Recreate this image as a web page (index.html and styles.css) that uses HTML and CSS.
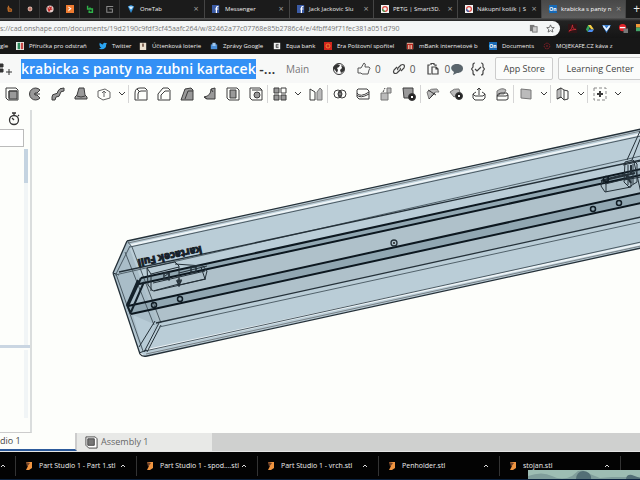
FILE: index.html
```html
<!DOCTYPE html>
<html lang="en">
<head>
  <meta charset="UTF-8">
  <title>krabicka s panty na zubni kartacek</title>
  <link rel="stylesheet" href="styles.css">
</head>
<body>

  <!-- browser tabs -->
  <nav class="tabs">
    <a href="#" class="pinned" aria-label="Pinned 1"><svg viewBox="0 0 10 10"><path d="M3 1l1 3 3 1v3H3zM2 3l1 5" fill="#8a4a1c" stroke="#c8742c"/></svg></a>
    <a href="#" class="pinned" aria-label="Pinned 2"><svg viewBox="0 0 10 10"><circle cx="5" cy="5" r="3" fill="#d9b8ac"/><path d="M3 5h4M5 3v4" stroke="#b05040"/></svg></a>
    <a href="#" class="pinned" aria-label="Pinned 3"><svg viewBox="0 0 10 10"><circle cx="5" cy="5" r="4.5" fill="#e5d0cd"/><path d="M2 3l3 5M4 2l3 4M7 2L3 8M2 6l6-1" stroke="#c32b28" stroke-width="1.4"/></svg></a>
    <a href="#" class="pinned" aria-label="Pinned 4"><svg viewBox="0 0 10 10"><rect width="10" height="10" fill="#ee7b30"/><path d="M3 2l4 2.5L3 8V6l2-1.500-2-1z" fill="#fff"/></svg></a>
    <a href="#" class="pinned" aria-label="Pinned 5"><svg viewBox="0 0 10 10"><path d="M2 1v4h3V3M5 5h3v4H4V7" fill="none" stroke="#2fb34a" stroke-width="1.8"/></svg></a>
    <a href="#" class="pinned" aria-label="Pinned 6"><svg viewBox="0 0 10 10"><path d="M9 2H1v7h7V5H4" fill="none" stroke="#8b8b8b" stroke-width="1.3"/></svg></a>
    <div class="tab"><svg viewBox="0 0 10 10"><path d="M1 2l4-2 4 2-4 8z" fill="#2f8fd6"/><path d="M2 2h6L5 6z" fill="#dff1ff"/></svg><a href="#">OneTab</a><button aria-label="Close OneTab">×</button></div>
    <div class="tab"><svg viewBox="0 0 10 10"><rect width="9" height="10" fill="#3b5ba5"/><path d="M8 2H7Q5.500 2 5.500 4v6M4 5h4" fill="none" stroke="#fff" stroke-width="1.500"/></svg><a href="#">Messenger</a><button aria-label="Close Messenger">×</button></div>
    <div class="tab"><svg viewBox="0 0 10 10"><rect width="9" height="10" fill="#3b5ba5"/><path d="M8 2H7Q5.500 2 5.500 4v6M4 5h4" fill="none" stroke="#fff" stroke-width="1.500"/></svg><a href="#">Jack Jackovic Slu</a><button aria-label="Close Jack Jackovic">×</button></div>
    <div class="tab"><svg viewBox="0 0 10 10"><rect width="10" height="10" fill="#f4f4f4"/><circle cx="5" cy="5" r="3" fill="none" stroke="#d8433c" stroke-width="1.500"/><path d="M2 5a3 3 0 0 0 3 3" fill="none" stroke="#3a9d50" stroke-width="1.500"/></svg><a href="#">PETG | Smart3D.</a><button aria-label="Close PETG">×</button></div>
    <div class="tab"><svg viewBox="0 0 10 10"><rect width="10" height="10" fill="#f4f4f4"/><circle cx="5" cy="5" r="3" fill="none" stroke="#d8433c" stroke-width="1.500"/><path d="M2 5a3 3 0 0 0 3 3" fill="none" stroke="#3767b5" stroke-width="1.500"/></svg><a href="#">Nákupní košík | S</a><button aria-label="Close Nákupní košík">×</button></div>
    <div class="tab active"><span class="on">On</span><a href="#">krabicka s panty n</a><button aria-label="Close krabicka">×</button></div>
    <button class="new-tab" aria-label="New tab">+</button>
  </nav>

  <div class="address">
    <label class="url-box" for="url"><input id="url" type="text" aria-label="Address" value="s://cad.onshape.com/documents/19d2190c9fdf3cf45aafc264/w/82462a77c07768e85b2786c4/e/4fbff49f71fec381a051d790">
      <svg viewBox="0 0 10 10"><rect x="1" y="1" width="5" height="7" fill="#777"/><rect x="4" y="3" width="5" height="6" fill="#ccc" stroke="#777"/></svg>
      <svg viewBox="0 0 10 10"><path d="M5 1l1.200 2.800 3 .2-2.300 2 .8 3L5 7.400 2.300 9l.8-3L.8 4l3-.2z" fill="none" stroke="#555" stroke-width=".9"/></svg>
    </label>
    <div class="extensions">
      <svg viewBox="0 0 10 10"><rect width="10" height="10" fill="#301416"/><path d="M1 8q4-2 4-7 0 5 4 5-5 0-8 2" fill="none" stroke="#c92d35"/></svg>
      <svg viewBox="0 0 10 10"><path d="M3.500 1h3L3 9 1 6z" fill="#36a35c"/><path d="M3.500 1h3L10 6H7z" fill="#f6cf45"/><path d="M3 9l1.500-3H10L8 9z" fill="#4c8df2"/></svg>
      <svg viewBox="0 0 10 10"><path d="M0 1h10L5 10z" fill="#3b7fd0"/><path d="M2 1l3 4 3-4 1 2-4 5-4-5z" fill="#eaf4ff"/></svg>
      <svg viewBox="0 0 10 10"><circle cx="4" cy="4" r="4" fill="#df2329"/><path d="M1 4h6" stroke="#fff" stroke-width="1.500"/><rect x="5" y="5" width="5" height="5" fill="#777"/></svg>
      <svg viewBox="0 0 10 10"><path d="M0 0h10v4H0z" fill="#f29a38"/><path d="M0 4h10v4H0z" fill="#43a66a"/></svg>
    </div>
  </div>

  <nav class="bookmarks">
    <a href="#">gle</a>
    <a href="#"><svg viewBox="0 0 10 10"><rect width="10" height="10" fill="#e9eee9"/><path d="M2 1h3v8H2z" fill="#2e8a5d"/><path d="M6 1h3v8H6z" fill="#c84848"/></svg><span>Příručka pro odstraň</span></a>
    <a href="#"><svg viewBox="0 0 10 10"><path d="M0 8q2 0 3-1-2-.5-2-2Q0 3 1 1q2 2 4 2 0-2 2-2l3 .5L9 3q0 6-6 6-2 0-3-1" fill="#2aa3ef"/></svg><span>Twitter</span></a>
    <a href="#"><svg viewBox="0 0 10 10"><path d="M1 1h8v9H1z" fill="#eadfce"/><path d="M4 2h2v4H4z" fill="#6b4b3b"/></svg><span>Účtenková loterie</span></a>
    <a href="#"><svg viewBox="0 0 10 10"><path d="M1 3h8v6H1z" fill="#4a8ed8"/><path d="M3 1h4v4H3z" fill="#9fc7ee"/></svg><span>Zprávy Google</span></a>
    <a href="#"><svg viewBox="0 0 10 10"><path d="M1 1h8v8H1z" fill="#f2f2f2"/><path d="M7 3H4v4h3M4 5h3" fill="none" stroke="#333"/></svg><span>Equa bank</span></a>
    <a href="#"><svg viewBox="0 0 10 10"><rect width="10" height="10" fill="#d3261d"/><circle cx="5" cy="5" r="2.500" fill="none" stroke="#f09b3b"/></svg><span>Era Poštovní spořitel</span></a>
    <a href="#"><svg viewBox="0 0 10 10"><path d="M1 1h8v8H1z" fill="#e9c9b2"/><path d="M2 9V3h3v6M5 3h3v6" fill="none" stroke="#b5271f" stroke-width="1.500"/></svg><span>mBank internetové b</span></a>
    <a href="#"><span class="on">On</span><span>Documents</span></a>
    <a href="#"><svg viewBox="0 0 10 10"><circle cx="5" cy="5" r="3.500" fill="none" stroke="#a31f2b" stroke-dasharray="2 1"/><circle cx="5" cy="5" r="1" fill="#a31f2b"/></svg><span>MOJEKAFE.CZ káva z</span></a>
  </nav>

  <!-- document header -->
  <header class="doc-header">
    <svg class="insert" viewBox="0 0 12 14"><path d="M0 2h3v3H0M0 7h3v3H0" fill="#333" stroke="#333"/><path d="M9 7v6M6 10h6" stroke="#333"/></svg>
    <h1><mark>krabicka s panty na zubni kartacek</mark> -...</h1>
    <span class="workspace">Main</span>
    <div class="stats">
      <svg viewBox="0 0 14 14"><circle cx="7" cy="7" r="5.500" fill="#fff" stroke="#333"/><path d="M2 4l3-2 3 1-1 2-2 1 1 2-1 3-2-3-2-2zM9 3l3 2v4l-3 2-1-3 2-2z" fill="#333"/></svg>
      <button aria-label="Likes"><svg viewBox="0 0 14 14"><path d="M1 6h3l3-5q2 0 1 4h4q2 1 0 3l-1 4H5L4 11H1z" fill="none" stroke="#555"/></svg>0</button>
      <button aria-label="Links"><svg viewBox="0 0 14 14"><path d="M6 8q-1-1 0-2l3-3q2-1 3 0t0 3L9 9M8 6q1 1 0 2l-3 3q-2 1-3 0t0-3l3-3" fill="none" stroke="#444" stroke-width="1.200"/></svg>0</button>
      <button aria-label="Copies"><svg viewBox="0 0 14 14"><path d="M5 3V1.500h3V3M4 3H2v9h3M8 3h2v1M6 5h4l2 2v5H6zM10 5v2h2" fill="none" stroke="#444" stroke-width="1.200"/></svg>0</button>
    </div>
    <button class="icon" aria-label="Comments"><svg viewBox="0 0 14 14"><path d="M7 2c8 0 8 9 0 9L3 13l1-3C-1 7 1 2 7 2" fill="#59646b"/></svg></button>
    <button class="icon" aria-label="FeatureScript"><svg viewBox="0 0 14 14"><path d="M4 1Q2 1 2 3v2L.500 7 2 9v2q0 2 2 2M10 1q2 0 2 2v2l1.500 2L12 9v2q0 2-2 2M4 7l2 2 4-4" fill="none" stroke="#444" stroke-width="1.200"/></svg></button>
    <button class="boxed">App Store</button>
    <button class="boxed last">Learning Center</button>
  </header>

  <!-- feature toolbar -->
  <div class="toolbar">
    <button aria-label="Extrude"><svg viewBox="0 0 14 14"><path class="f" d="M4 4h8v8H4z"/><path d="M1 1h10l2 2v10H3L1 11zM4 4v7M4 4h8"/></svg></button>
    <button aria-label="Revolve"><svg viewBox="0 0 14 14"><path class="f" d="M12 3A6 6 0 1 0 12 11L9 8H7V6h2z"/><path d="M6 7l6 0"/></svg></button>
    <button aria-label="Sweep"><svg viewBox="0 0 14 14"><path class="f" d="M1 10q0-3 3-3 3 0 3-3 1-3 6-3v3Q9 4 9 7q0 3-4 3l-1 3H1z"/></svg></button>
    <button aria-label="Loft"><svg viewBox="0 0 14 14"><path class="f" d="M5 1h5l1 7 2 2v2H1v-2l2-2z"/><path d="M3 9q4 2 8 0"/></svg></button>
    <button aria-label="Thicken"><svg viewBox="0 0 14 14"><path d="M1 4l7-2 5 3v6l-7 2-5-3zM7 5v5M5 6l2-2 2 2" stroke="#666"/></svg></button>
    <button class="more" aria-label="More solids"><svg viewBox="0 0 8 6"><path d="M1 1l3 3 3-3"/></svg></button>
    <i></i>
    <button aria-label="Fillet"><svg viewBox="0 0 14 14"><path d="M1 13V6q0-5 5-5h5l2 2v10zM4 12V7q0-3 3-3h5M3 2l2 2"/></svg></button>
    <button aria-label="Chamfer"><svg viewBox="0 0 14 14"><path d="M1 13V7l5-6h5l2 2v10zM4 12V8l4-4h4"/></svg></button>
    <button aria-label="Draft"><svg viewBox="0 0 14 14"><path class="f" d="M1 13L5 2l6-1 2 2v10z"/><path d="M5 12l3-8h5"/></svg></button>
    <button aria-label="Rib"><svg viewBox="0 0 14 14"><path class="f" d="M1 10q7-1 7-8l4-1v11H4z"/><path d="M1 10l3 2M8 2l2 3"/></svg></button>
    <button aria-label="Shell"><svg viewBox="0 0 14 14"><path d="M1 1h10l2 2v10H3L1 11z"/><path class="f" d="M4 3h6v8H4z"/></svg></button>
    <button aria-label="Hole"><svg viewBox="0 0 14 14"><path d="M1 1h10l2 2v10H3L1 11zM3 3h10"/><circle class="f" cx="8" cy="8" r="3"/></svg></button>
    <i></i>
    <button aria-label="Pattern"><svg viewBox="0 0 14 14"><path class="f" d="M1 1h5v5H1zM1 8h5v5H1zM8 8h5v5H8z"/><path d="M8 1h5v5H8z"/></svg></button>
    <button class="more" aria-label="More patterns"><svg viewBox="0 0 8 6"><path d="M1 1l3 3 3-3"/></svg></button>
    <button aria-label="Mirror"><svg viewBox="0 0 14 14"><path d="M1 2l5 3v8H1z"/><path class="l" d="M8 5l3-4 2 2v10H8z"/></svg></button>
    <i></i>
    <button aria-label="Boolean"><svg viewBox="0 0 14 14"><circle cx="5" cy="7" r="4"/><circle cx="9" cy="7" r="4"/><path class="f" d="M7 4q3 3 0 6-3-3 0-6"/></svg></button>
    <button aria-label="Split"><svg viewBox="0 0 14 14"><path d="M2 2h9l2 2v8H3L1 10V3zM1 6q3 5 12-1M1 8q3 4 12-1"/></svg></button>
    <button aria-label="Transform"><svg viewBox="0 0 14 14"><path class="l" d="M2 6h7v7H2z"/><path class="l" d="M8 1h4v5H8z"/><path d="M4 5l2-4" stroke-dasharray="2 1"/></svg></button>
    <button aria-label="Delete part"><svg viewBox="0 0 14 14"><path class="f" d="M1 1h10v10H2z"/><circle cx="10" cy="10" r="3.500" fill="#222"/><path d="M9 9l2 2M11 9l-2 2" stroke="#fff"/></svg></button>
    <i></i>
    <button aria-label="Modify fillet"><svg viewBox="0 0 14 14"><path class="l" d="M1 5q4-4 10-3l2 3q-6-1-8 5l-2 2z"/><path d="M3 12L9 6M2 3l8 5"/></svg></button>
    <button aria-label="Delete face"><svg viewBox="0 0 14 14"><path class="l" d="M1 5q4-4 9-3l1 4-6 4z"/><circle cx="10" cy="9" r="3.500" fill="#222"/><path d="M9 8l2 2M11 8l-2 2" stroke="#fff"/></svg></button>
    <button aria-label="Move face"><svg viewBox="0 0 14 14"><path d="M1 7l3-2M10 5l3 2v4l-2 2H3L1 11V7l2 2h8l2-2M7 8V1M5 3l2-2 2 2"/></svg></button>
    <button aria-label="Replace face"><svg viewBox="0 0 14 14"><path class="l" d="M2 4q5-4 9-1l-2 4q-4-1-7 2z"/><path d="M2 9q1-3 4-3h6l1 2v4l-2 1H2zM2 9h9l2-1"/></svg></button>
    <i></i>
    <button aria-label="Plane"><svg viewBox="0 0 14 14"><path class="l" d="M2 2l10 1v9L2 11z"/></svg></button>
    <button class="more" aria-label="More planes"><svg viewBox="0 0 8 6"><path d="M1 1l3 3 3-3"/></svg></button>
    <i></i>
    <button aria-label="Frame"><svg viewBox="0 0 14 14"><path class="l" d="M1 3l4-2v9l-4 2z"/><path d="M1 3l4-2 3 2v10L5 10M1 12l4-2M8 3l4 1v8l-4 1"/></svg></button>
    <button class="more" aria-label="More frames"><svg viewBox="0 0 8 6"><path d="M1 1l3 3 3-3"/></svg></button>
    <i></i>
    <button aria-label="Add custom features"><svg viewBox="0 0 14 14"><path d="M1 1h12v12H1z" stroke-dasharray="3 2" stroke="#888"/><path d="M7 4v6M4 7h6" stroke-width="2"/></svg></button>
    <button class="more" aria-label="More features"><svg viewBox="0 0 8 6"><path d="M1 1l3 3 3-3"/></svg></button>
  </div>

  <main>
    <aside>
      <button class="rollback" aria-label="Regeneration times"><svg viewBox="0 0 14 14"><circle cx="7" cy="8" r="4.500"/><path d="M5 1h4M7 1v3M7 8L5 6M11 3l1 1"/></svg></button>
      <input type="text" class="filter" aria-label="Filter features">
      <div class="features"><div class="thumb"></div></div>
      <div class="parts"></div>
    </aside>
    <svg class="model" viewBox="31 104 609 329" preserveAspectRatio="xMinYMin slice" fill="none" stroke="#243038">
      <path d="M126 241L640 129V248L144 356 138 352 112 273z" fill="#bacdd7" stroke="none"/>
      <path d="M140 278L640 170V217L156 323z" fill="#afc1ca" stroke="none"/>
      <path d="M126 241L112 273 140 350 157 324 140 280z" fill="#a9bdc8" stroke="none"/>
      <path d="M132 315L155 325 142 350z" fill="#b7cbd6" stroke="none"/>
      <path d="M140 278L640 169V175L138 285z" fill="#91a7b2" stroke="none"/>
      <path d="M127 306L640 193V203L130 314z" fill="#91a7b2" stroke="none"/>
      <!-- rounded outer edges -->
      <path d="M130 245L640 134M146 350L640 244" stroke="#eef4f7" stroke-width="2"/>
      <path d="M126 241L640 129M112 273L126 241M112 273L139 354Q141 357 146 356L640 248" stroke-width="1.300"/>
      <path d="M127 243L640 131M145 354L640 246" stroke="#777f84"/>
      <path d="M129 247L640 136M144 351L640 242M115 274L129 246M115 274L142 351M126 241L131 247 160 323M124 252L153 325" stroke="#4b5a63"/>
      <path d="M158 323L143 352M154 321L138 347M160 325L146 352M112 273L118 275M138 353L146 350"/>
      <!-- inner walls -->
      <path d="M114 275L640 156M158 327L640 222" stroke="#52626b"/>
      <path d="M118 272L640 160M155 323L640 217" stroke-width="1.300"/>
      <!-- hinge rails -->
      <path d="M140 278L640 169M138 284L640 175M127 306L640 193M130 314L640 203" stroke="#0c171f" stroke-width="2"/>
      <path d="M140 278L127 306M143 282L130 312M137 280L126 305L130 314" stroke="#14212a" stroke-width="2"/>
      <!-- left hinge -->
      <path d="M146 268L174 262 178 266V284L152 291 147 285zM146 268L150 274V291M150 274L178 267M152 283L204 271M153 291L205 279M174 264L202 266 206 271 204 279 178 285M178 273L206 266M164 276l4-3v8M200 267l4 12M178 278v9M176 280h5"/>
      <path d="M163 273h5v6h-5zM190 267h5v5h-5zM176 281l2 4 2-4z" stroke-width="1.500"/>
      <!-- right hinge -->
      <path d="M601 180L624 174 630 178V187L604 192 600 186zM601 180l4 4v8M604 184L633 177M624 162l8-2 4 4v18l-8 5-5-5zM627 165v20M632 164v20M622 165L640 161M623 180L640 177"/>
      <path d="M600 181L634 173M630 165v10M625 175l5 8" stroke-width="2"/>
      <path d="M640 129L626 160M640 137L631 160M633 162L640 193"/>
      <g stroke="#101c24" stroke-width="1.500">
        <circle cx="153" cy="305" r="2.500"/><circle cx="179" cy="299" r="2.500"/>
        <circle cx="592" cy="209" r="2.500"/><circle cx="618" cy="203" r="2.500"/><circle cx="605" cy="179" r="2.500"/>
      </g>
      <circle cx="393" cy="243" r="3" stroke-width="1.300"/><circle cx="393" cy="243" r="1" fill="#222" stroke="none"/>
      <text class="engraving" transform="translate(200 246) rotate(168)" fill="#17212a" stroke="#17212a">kartacek Full</text>
    </svg>
  </main>

  <nav class="studio-tabs">
    <a href="#" class="current">dio 1</a>
    <a href="#" class="assembly"><svg viewBox="0 0 14 14"><path d="M1 1h10l2 2v10H4L1 10z" fill="#fff" stroke="#444"/><path d="M3 3h7v7H3z" fill="#777" stroke="#444"/></svg>Assembly 1</a>
  </nav>

  <footer class="downloads">
    <div class="download first"><button aria-label="Options"><svg viewBox="0 0 6 4"><path d="M1 3l2-2 2 2"/></svg></button></div>
    <div class="download"><svg viewBox="0 0 8 10"><path d="M1 1h6v6L4 9H1l2-4z" fill="#ef9440"/><path d="M1 1l4 1-3 4z" fill="#73442a"/></svg><a href="#">Part Studio 1 - Part 1.stl</a><button aria-label="Options"><svg viewBox="0 0 6 4"><path d="M1 3l2-2 2 2"/></svg></button></div>
    <div class="download"><svg viewBox="0 0 8 10"><path d="M1 1h6v6L4 9H1l2-4z" fill="#ef9440"/><path d="M1 1l4 1-3 4z" fill="#73442a"/></svg><a href="#">Part Studio 1 - spod....stl</a><button aria-label="Options"><svg viewBox="0 0 6 4"><path d="M1 3l2-2 2 2"/></svg></button></div>
    <div class="download"><svg viewBox="0 0 8 10"><path d="M1 1h6v6L4 9H1l2-4z" fill="#ef9440"/><path d="M1 1l4 1-3 4z" fill="#73442a"/></svg><a href="#">Part Studio 1 - vrch.stl</a><button aria-label="Options"><svg viewBox="0 0 6 4"><path d="M1 3l2-2 2 2"/></svg></button></div>
    <div class="download"><svg viewBox="0 0 8 10"><path d="M1 1h6v6L4 9H1l2-4z" fill="#ef9440"/><path d="M1 1l4 1-3 4z" fill="#73442a"/></svg><a href="#">Penholder.stl</a><button aria-label="Options"><svg viewBox="0 0 6 4"><path d="M1 3l2-2 2 2"/></svg></button></div>
    <div class="download"><svg viewBox="0 0 8 10"><path d="M1 1h6v6L4 9H1l2-4z" fill="#ef9440"/><path d="M1 1l4 1-3 4z" fill="#73442a"/></svg><a href="#">stojan.stl</a><button aria-label="Options"><svg viewBox="0 0 6 4"><path d="M1 3l2-2 2 2"/></svg></button></div>
    <svg class="webcam" viewBox="0 0 112 10" preserveAspectRatio="none"><rect width="112" height="10" fill="#9dbdb3"/><path d="M0 6q14-5 24 0t20 0l6-5q7-2 12 3l10 4 12-1h28v4H0z" fill="#809e9b"/><path d="M48 10q0-8 7-9 9 1 8 9M98 10q0-6 6-5l8 3v2z" fill="#536f76"/></svg>
  </footer>

</body>
</html>
```
FILE: styles.css
```css
* {
  box-sizing: border-box;
}

body {
  margin: 0;
  height: 100vh;
  display: flex;
  flex-direction: column;
  overflow: hidden;
  font-family: "Open Sans", "Noto Sans", sans-serif;
  background: #fdfefb;
  color: #444;
}

a {
  color: inherit;
  text-decoration: none;
}

button {
  border: 0;
  padding: 0;
  background: none;
  color: inherit;
  font-family: inherit;
}

svg {
  flex: none;
}

/* browser */
.tabs {
  flex: 0 0 18px;
  display: flex;
  background: #1b1b1b;
  color: #eee;
  font-size: 6px;
}

.tabs svg,
.bookmarks svg {
  width: 8px;
  height: 8px;
}

.pinned {
  flex: 0 0 20px;
  display: flex;
  align-items: center;
  justify-content: center;
  border-right: 1px solid #333;
}

.tab {
  flex: 1 1 0;
  min-width: 0;
  display: flex;
  align-items: center;
  gap: 5px;
  padding: 0 5px 0 7px;
  border-right: 1px solid #444;
}

.tab a {
  flex: 1;
  white-space: nowrap;
}

.tab button {
  flex: 0 0 6px;
  font-size: 9px;
  line-height: 10px;
  color: #999;
}

.tab.active {
  background: linear-gradient(#484848, #5c5c5c);
  color: #fff;
}

.tab.active,
.tab:nth-of-type(n + 3) {
  gap: 4px;
  padding-right: 4px;
}

.new-tab {
  width: 14px;
  text-align: right;
  font-size: 12px;
  line-height: 14px;
}

.on {
  flex: none;
  width: 8px;
  height: 8px;
  background: #1769b5;
  color: #fff;
  font-size: 5px;
  line-height: 8px;
  font-weight: bold;
  text-align: center;
}

.address {
  flex: 0 0 20px;
  display: flex;
  align-items: center;
  background: linear-gradient(#555, #222 3px, #151515);
}

.url-box {
  flex: 1;
  height: 15px;
  display: flex;
  align-items: center;
  gap: 8px;
  padding-right: 5px;
  border-radius: 0 8px 8px 0;
  background: #f4f6f6;
}

.url-box input {
  flex: 1;
  min-width: 0;
  border: 0;
  padding: 0;
  background: none;
  color: #777;
  font-family: inherit;
  font-size: 7px;
}

.url-box svg,
.extensions svg {
  width: 9px;
  height: 9px;
}

.extensions {
  flex: 0 0 80px;
  display: flex;
  gap: 8px;
  padding-left: 8px;
  overflow: hidden;
}

.bookmarks {
  flex: 0 0 16px;
  display: grid;
  grid-template-columns: 16px 83px 40px 71px 63px 51px 82px 83px 54px 1fr;
  align-items: center;
  background: #171717;
  color: #eee;
  font-size: 6px;
}

.bookmarks a {
  display: flex;
  align-items: center;
  gap: 5px;
  white-space: nowrap;
}

/* document header */
.doc-header {
  flex: 0 0 29px;
  display: flex;
  align-items: center;
  background: #f7f8f7;
  overflow: hidden;
  white-space: nowrap;
}

.insert {
  width: 12px;
  height: 14px;
  margin-right: 9px;
}

h1 {
  flex: 0 0 265px;
  margin: 0;
  font-size: 14px;
  line-height: 20px;
  font-weight: 600;
  color: #333;
}

mark {
  display: inline-block;
  background: #3390f5;
  color: #fff;
}

.workspace {
  flex: 0 0 46px;
  font-size: 10px;
  color: #777;
}

.stats {
  flex: 1;
  display: flex;
  align-items: center;
  gap: 11px;
}

.stats button {
  display: flex;
  align-items: center;
  gap: 4px;
  font-size: 10px;
  color: #555;
}

.doc-header .stats svg,
.icon svg {
  display: block;
  width: 14px;
  height: 14px;
}

.icon {
  flex: 0 0 21px;
}

.boxed {
  flex: 0 0 58px;
  height: 23px;
  margin-left: 3px;
  border: 1px solid #ccc;
  border-radius: 2px;
  background: #fbfcfb;
  font-size: 9px;
}

.boxed.last {
  flex-basis: 84px;
  margin: 0 -2px 0 5px;
}

/* toolbar */
.toolbar {
  flex: 0 0 21px;
  display: flex;
  align-items: center;
  overflow: hidden;
}

.toolbar button {
  flex: 0 0 23px;
  display: flex;
  justify-content: center;
}

.toolbar button.more {
  flex-basis: 13px;
}

.toolbar svg {
  width: 14px;
  height: 14px;
  fill: none;
  stroke: #3c3c3c;
}

.toolbar .more svg {
  width: 8px;
  height: 6px;
}

.toolbar i {
  flex: 0 0 1px;
  height: 18px;
  background: #d5d5d5;
}

.toolbar .f {
  fill: #999;
}

.toolbar .l {
  fill: #bbb;
  stroke: #777;
}

/* workspace */
main {
  flex: 1;
  min-height: 0;
  display: flex;
}

aside {
  flex: 0 0 32px;
  display: flex;
  flex-direction: column;
  margin-top: 6px;
  border-right: 2px solid #dadddd;
  border-bottom: 1px solid #ccc;
}

.rollback {
  align-self: flex-end;
  margin: 2px 9px 3px 0;
  height: 14px;
}

.rollback svg {
  display: block;
  width: 14px;
  height: 14px;
  fill: none;
  stroke: #333;
  stroke-width: 1.3;
}

.filter {
  width: 24px;
  height: 18px;
  border: 1px solid #bbb;
  border-left: 0;
  background: #fff;
}

.features,
.parts {
  width: 4px;
  margin: 2px 0 0 24px;
  background: #f1f5f6;
}

.features {
  flex: 1;
}

.thumb {
  height: 34px;
  background: #c5d4e1;
}

.parts {
  flex: 0 0 87px;
  margin: 0;
  width: auto;
  border-top: 3px solid #cad6e2;
  background: linear-gradient(#f1f5f6, #f1f5f6) 24px 2px / 4px 68px no-repeat;
}

.model {
  flex: 1;
  min-width: 0;
  height: 100%;
}

.engraving {
  font-size: 10px;
  font-weight: bold;
}

/* studio tabs */
.studio-tabs {
  flex: 0 0 19px;
  display: flex;
  background: #cfd0cf;
  border-bottom: 1px solid #e4e4e4;
  font-size: 9px;
  line-height: 16px;
}

.current {
  flex: 0 0 77px;
  border-right: 2px solid #ccc;
  border-bottom: 2px solid #2c5a9b;
  background: #fdfefb;
}

.assembly {
  flex: 0 0 135px;
  display: flex;
  align-items: center;
  gap: 3px;
  padding-left: 8px;
  background: #e8e9e7;
  color: #666;
}

.assembly svg {
  width: 13px;
  height: 13px;
}

/* downloads */
.downloads {
  position: relative;
  flex: 0 0 28px;
  display: flex;
  align-items: center;
  background: #030303;
  border-bottom: 1px solid #0c2340;
  color: #eee;
  font-size: 7px;
  overflow: hidden;
}

.download {
  flex: 0 0 121px;
  min-width: 0;
  height: 20px;
  display: flex;
  align-items: center;
  gap: 6px;
  padding: 0 10px 0 9px;
  border-right: 1px solid #333;
}

.download.first {
  flex-basis: 16px;
  padding: 0;
}

.download > svg {
  width: 8px;
  height: 10px;
}

.download a {
  flex: 1;
  min-width: 0;
  white-space: nowrap;
}

.download button {
  flex: none;
}

.download button svg {
  display: block;
  width: 6px;
  height: 4px;
  fill: none;
  stroke: #ddd;
}

.webcam {
  position: absolute;
  right: 0;
  bottom: -1px;
  width: 112px;
  height: 10px;
}
```
